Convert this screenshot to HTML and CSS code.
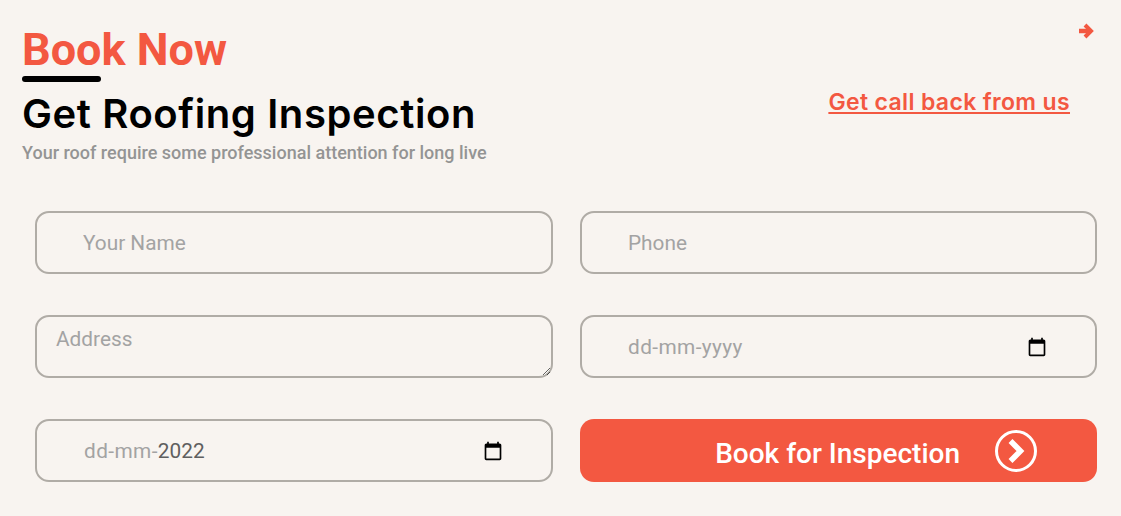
FILE: index.html
```html
<!DOCTYPE html>
<html lang="en">
<head>
<meta charset="utf-8">
<title>Book Now</title>
<link rel="stylesheet" href="styles.css">
</head>
<body>
<main class="booking">
  <a class="corner-arrow" href="#" aria-label="Next">
    <svg viewBox="0 0 15 16" width="15" height="16"><path d="M0 8h12" fill="none" stroke="currentColor" stroke-width="4.500"/><path d="M6 2 12 8l-6 6" fill="none" stroke="currentColor" stroke-width="4"/></svg>
  </a>
  <header class="head">
    <div class="titles">
      <h2 class="eyebrow">Book Now</h2>
      <div class="rule"></div>
      <h1 class="title">Get Roofing Inspection</h1>
      <p class="sub">Your roof require some professional attention for long live</p>
    </div>
    <a class="callback" href="#">Get call back from us</a>
  </header>
  <form class="form">
    <input class="field" type="text" placeholder="Your Name">
    <input class="field" type="text" placeholder="Phone">
    <textarea class="field area" placeholder="Address"></textarea>
    <div class="field date">
      <span class="ph">dd-mm-yyyy</span>
      <svg class="cal" viewBox="0 0 24 24" width="20" height="20"><path d="M20 3h-1V1h-2v2H7V1H5v2H4c-1.1 0-2 .9-2 2v16c0 1.1.9 2 2 2h16c1.1 0 2-.9 2-2V5c0-1.1-.9-2-2-2zm0 18H4V8h16v13z"/></svg>
    </div>
    <div class="field date date-partial">
      <span><span class="ph">dd-mm-</span><span class="val">2022</span></span>
      <svg class="cal" viewBox="0 0 24 24" width="20" height="20"><path d="M20 3h-1V1h-2v2H7V1H5v2H4c-1.1 0-2 .9-2 2v16c0 1.1.9 2 2 2h16c1.1 0 2-.9 2-2V5c0-1.1-.9-2-2-2zm0 18H4V8h16v13z"/></svg>
    </div>
    <button class="submit" type="button">
      <span class="submit-label">Book for Inspection</span>
      <svg viewBox="0 0 42 42" width="42" height="42"><circle cx="21" cy="21" r="19.500" fill="none" stroke="#fff" stroke-width="3"/><path d="M15.500 11 25.500 21 15.500 31" fill="none" stroke="#fff" stroke-width="5.500"/></svg>
    </button>
  </form>
</main>
</body>
</html>
```
FILE: styles.css
```css
* { box-sizing: border-box; }
html, body { margin: 0; height: 100%; }
body { background: #f8f4f0; font-family: Roboto, sans-serif; overflow: hidden; }
.booking { position: relative; padding: 24px 24px 0 22px; }
.corner-arrow { position: absolute; top: 23px; right: 27px; color: #f35841; line-height: 0; }
.head { display: flex; justify-content: space-between; align-items: flex-start; }
.eyebrow { margin: 0; font-size: 45px; line-height: 51px; font-weight: 700; color: #f35841; }
.rule { width: 79px; height: 6px; margin-top: 1px; background: #000; border-radius: 3px; }
.title { margin: 9px 0 0; font-family: Inter, sans-serif; font-size: 40px; line-height: 46px; font-weight: 600; letter-spacing: .6px; color: #000; white-space: nowrap; }
.sub { margin: 5px 0 0; font-size: 18px; line-height: 21px; font-weight: 500; color: #949494; }
.callback { margin: 65px 27px 0 0; font-family: Inter, sans-serif; font-size: 23px; line-height: 26px; font-weight: 600; letter-spacing: .35px; color: #f35841; white-space: nowrap; }
.form { display: grid; grid-template-columns: 518px 517px; column-gap: 27px; row-gap: 41px; margin: 48px 0 0 13px; }
.field { display: block; width: 100%; height: 63px; padding: 0 46px; margin: 0; background: transparent; border: 2px solid #b0aca6; border-radius: 14px; font-family: Roboto, sans-serif; font-size: 20.800px; color: #555; outline: none; }
.field::placeholder { color: #a3a3a3; opacity: 1; }
.area { padding: 10px 19px; resize: vertical; line-height: 24px; }
.date { display: flex; align-items: center; justify-content: space-between; padding-right: 48px; }
.date-partial { padding-left: 47px; }
.ph { color: #a3a3a3; letter-spacing: .4px; }
.val { color: #5f5f5f; }
.cal { flex: none; fill: #000; }
.submit { display: flex; align-items: center; justify-content: flex-end; gap: 35px; height: 63px; padding: 0 60px 0 0; border: 0; border-radius: 14px; background: #f35841; color: #fff; font-family: Roboto, sans-serif; font-size: 28px; font-weight: 500; }
.submit-label { padding-top: 6px; }
```
